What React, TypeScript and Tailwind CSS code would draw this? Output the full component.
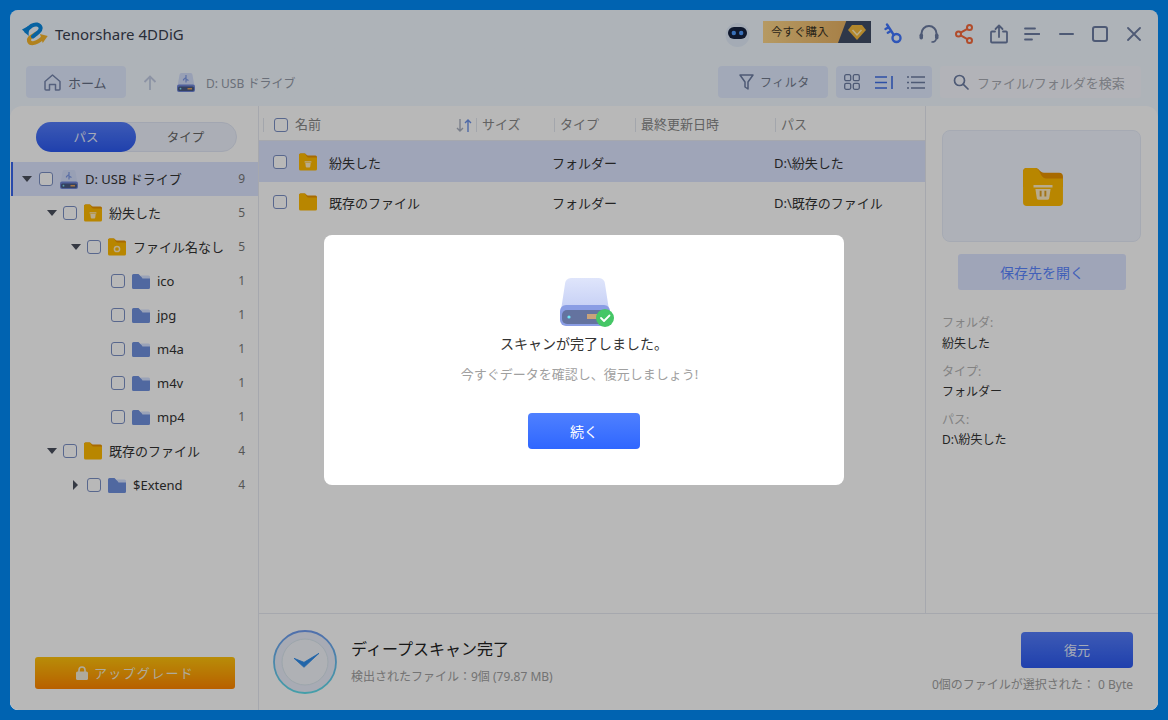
import React from "react";

const Check = ({ cls = "" }: { cls?: string }) => (
  <span className={"block w-[14px] h-[14px] shrink-0 rounded-[3px] border border-[#7b8fc4] bg-white " + cls} />
);

const Folder = ({ kind, size = 18 }: { kind: "trash" | "ring" | "plain" | "blue"; size?: number }) => {
  if (kind === "blue") {
    return (
      <svg width={size} height={size} viewBox="0 0 18 18" className="shrink-0">
        <path d="M0 3.5A1.5 1.5 0 0 1 1.5 2H6.500L9 4.500H16.500A1.500 1.500 0 0 1 18 6V15.500A1.500 1.500 0 0 1 16.500 17H1.500A1.500 1.500 0 0 1 0 15.500Z" fill="#7091de" />
        <path d="M8.500 3.500H16.500A1.500 1.500 0 0 1 18 5V6.500H10.500Z" fill="#d6e2ff" />
      </svg>
    );
  }
  return (
    <svg width={size} height={size} viewBox="0 0 18 18" className="shrink-0">
      <path d="M0 2A1.500 1.500 0 0 1 1.500 .5H5.500C7 .5 7.500 2.500 9 2.500H16.500A1.500 1.500 0 0 1 18 4V8H0Z" fill="#e99300" />
      <path d="M0 2A1.500 1.500 0 0 1 1.500 .5H5.500C7.500 .5 7 4.500 9.500 4.500H18V16A1.500 1.500 0 0 1 16.500 17.500H1.500A1.500 1.500 0 0 1 0 16Z" fill="#ffba00" />
      {kind === "trash" && (
        <g fill="#ffedc4">
          <rect x="5.500" y="8.200" width="7" height="1.200" rx=".5" />
          <path d="M6.300 10H11.700L11.200 13.800A.8.8 0 0 1 10.400 14.500H7.600A.8.8 0 0 1 6.800 13.800Z" />
        </g>
      )}
      {kind === "ring" && <circle cx="9" cy="11" r="2.600" fill="none" stroke="#ffedc4" strokeWidth="1.500" />}
    </svg>
  );
};

const SmallDrive = () => (
  <svg width="18" height="19" viewBox="0 0 18 19" className="shrink-0">
    <path d="M2.500 2A2 2 0 0 1 4.500 0H13.500A2 2 0 0 1 15.500 2L17.500 13H.5Z" fill="#d3defb" />
    <rect x="0" y="11.500" width="18" height="7.500" rx="2" fill="#6f86d8" />
    <rect x="1" y="13.500" width="16" height="4.500" rx="1.500" fill="#4a5a86" />
    <circle cx="3.500" cy="15.700" r=".9" fill="#7fe3f0" />
    <rect x="10.500" y="15" width="4.500" height="1.500" fill="#e5a35f" />
    <path d="M9 2V9.500M9 4.500L6.500 6.500V7.500M9 6L11.500 7.500" stroke="#7f9ae6" strokeWidth="1.200" fill="none" />
  </svg>
);

const Arrow = ({ dir }: { dir: "down" | "right" | "none" }) => (
  <span className="w-[11px] flex justify-center shrink-0">
    {dir === "down" && <span className="block w-0 h-0 border-x-[5px] border-x-transparent border-t-[6px] border-t-[#4a4f5e]" />}
    {dir === "right" && <span className="block w-0 h-0 border-y-[5px] border-y-transparent border-l-[5px] border-l-[#4a4f5e]" />}
  </span>
);

const rows = [
  { pl: "pl-[36px]", dir: "down", icon: "trash", label: "紛失した", n: 5 },
  { pl: "pl-[60px]", dir: "down", icon: "ring", label: "ファイル名なし", n: 5 },
  { pl: "pl-[84px]", dir: "none", icon: "blue", label: "ico", n: 1 },
  { pl: "pl-[84px]", dir: "none", icon: "blue", label: "jpg", n: 1 },
  { pl: "pl-[84px]", dir: "none", icon: "blue", label: "m4a", n: 1 },
  { pl: "pl-[84px]", dir: "none", icon: "blue", label: "m4v", n: 1 },
  { pl: "pl-[84px]", dir: "none", icon: "blue", label: "mp4", n: 1 },
  { pl: "pl-[36px]", dir: "down", icon: "plain", label: "既存のファイル", n: 4 },
  { pl: "pl-[60px]", dir: "right", icon: "blue", label: "$Extend", n: 4 },
] as const;

const Logo = () => (
  <svg width="26" height="24" viewBox="0 0 26 24" className="shrink-0">
    <path d="M14.500 11.500C10 14.500 6 15.500 7 19C8 22 13 22.500 20 16.500" fill="none" stroke="#f5b52a" strokeWidth="4" strokeLinecap="round" />
    <path d="M18 12L25.700 14L20.700 21Z" fill="#f5b52a" />
    <path d="M4.500 9.500C7 4 12 2 15 2.500C19 3.500 20 7 16.500 10L11 14.500" fill="none" stroke="#0a88e0" strokeWidth="4" strokeLinecap="round" />
    <path d="M0 7.500L6.500 4L6.700 14Z" fill="#0a88e0" />
  </svg>
);

const Robot = () => (
  <svg width="27" height="27" viewBox="0 0 27 27" className="shrink-0">
    <ellipse cx="13.500" cy="14" rx="12" ry="12" fill="#e3eefb" />
    <rect x="4" y="6" width="19" height="12" rx="6" fill="#15223f" />
    <circle cx="9.800" cy="12" r="2.200" fill="#4f9cff" />
    <circle cx="17.200" cy="12" r="2.200" fill="#4f9cff" />
  </svg>
);

const Gem = () => (
  <svg width="18" height="15" viewBox="0 0 18 15">
    <path d="M4 0H14L18 5L9 15L0 5Z" fill="#f7bb3c" />
    <path d="M4.500 5L9 10L13.500 5" fill="none" stroke="#fff0c0" strokeWidth="1.500" />
  </svg>
);

export default function App() {
  return (
    <div className="w-[1168px] h-[720px] bg-[#0063b1] p-[10px] font-['Noto_Sans','Noto_Sans_CJK_JP',sans-serif] text-[#333]">
      <div className="relative w-full h-full rounded-lg overflow-hidden flex flex-col bg-gradient-to-b from-[#f2f8ff] via-[#f2f8ff] to-[#e6f0ff]">
        {/* title bar */}
        <div className="h-[48px] flex items-center pl-[12px] shrink-0">
          <Logo />
          <span className="ml-[7px] text-[15px] text-[#39404f] mt-[1px]">Tenorshare 4DDiG</span>
          <div className="ml-auto flex items-center">
            <Robot />
            <div className="ml-[12px] -mt-[4px] w-[108px] h-[22px] flex overflow-hidden bg-gradient-to-r from-[#fcd589] to-[#e2a857]">
              <span className="w-[75px] text-[11.500px] leading-[22px] pl-[8px] text-[#3a3325]">今すぐ購入</span>
              <span className="flex-1 flex items-center justify-center bg-[#414d66] [clip-path:polygon(25%_0,100%_0,100%_100%,0_100%)] pl-[5px]">
                <Gem />
              </span>
            </div>
            <svg width="18" height="21" viewBox="0 0 18 21" className="ml-[13px] -mt-[2px]" fill="none" stroke="#4076ff" strokeWidth="2.400" strokeLinecap="round">
              <circle cx="12.500" cy="15" r="4" />
              <path d="M9.800 12L3 1.500M4.700 4.300L1.500 6M7 8L3.800 9.700" />
            </svg>
            <svg width="20" height="20" viewBox="0 0 20 20" className="ml-[17px]" fill="none" stroke="#6d7da3" strokeWidth="2" strokeLinecap="round">
              <path d="M2.500 12V9.500A7.500 7.500 0 0 1 17.500 9.500V12" />
              <rect x="0.500" y="9.500" width="3.500" height="6" rx="1.700" fill="#6d7da3" stroke="none" />
              <rect x="16" y="9.500" width="3.500" height="6" rx="1.700" fill="#6d7da3" stroke="none" />
              <path d="M17 15.500C16.500 17.500 15 18 13 18" strokeWidth="1.600" />
            </svg>
            <svg width="18" height="20" viewBox="0 0 18 20" className="ml-[16px]" fill="none" stroke="#f56a3c" strokeWidth="2">
              <circle cx="3.500" cy="10" r="2.500" />
              <circle cx="14.500" cy="3.500" r="2.500" />
              <circle cx="14.500" cy="16.500" r="2.500" />
              <path d="M5.700 8.700L12.300 4.800M5.700 11.300L12.300 15.200" />
            </svg>
            <svg width="18" height="20" viewBox="0 0 18 20" className="ml-[17px]" fill="none" stroke="#6d7da3" strokeWidth="1.800" strokeLinecap="round" strokeLinejoin="round">
              <path d="M5 7.500H2A1 1 0 0 0 1 8.500V17.500A1 1 0 0 0 2 18.500H16A1 1 0 0 0 17 17.500V8.500A1 1 0 0 0 16 7.500H13" />
              <path d="M9 13V2M5.500 5L9 1.500L12.500 5" />
            </svg>
            <svg width="16" height="14" viewBox="0 0 16 14" className="ml-[16px]" fill="none" stroke="#6d7da3" strokeWidth="1.800" strokeLinecap="round">
              <path d="M1 1.500H11M1 7H15.500M1 12.500H8" />
            </svg>
            <svg width="15" height="2" viewBox="0 0 15 2" className="ml-[19px]"><rect width="15" height="2" rx="1" fill="#6d7da3" /></svg>
            <svg width="16" height="16" viewBox="0 0 16 16" className="ml-[18px]" fill="none" stroke="#6d7da3" strokeWidth="2"><rect x="1" y="1" width="14" height="14" rx="2" /></svg>
            <svg width="14" height="14" viewBox="0 0 14 14" className="ml-[19px] mr-[17px]" fill="none" stroke="#6d7da3" strokeWidth="1.800" strokeLinecap="round"><path d="M1 1L13 13M13 1L1 13" /></svg>
          </div>
        </div>

        {/* toolbar */}
        <div className="mt-[8px] h-[32px] flex items-center pl-[16px] shrink-0">
          <div className="w-[100px] h-[32px] rounded-[4px] bg-[#e1ebff] flex items-center pl-[18px] gap-[7px]">
            <svg width="17" height="17" viewBox="0 0 17 17" fill="none" stroke="#7686ad" strokeWidth="1.500" strokeLinejoin="round">
              <path d="M1 7.500L8.500 1L16 7.500V15A1 1 0 0 1 15 16H11.500V10.500H5.500V16H2A1 1 0 0 1 1 15Z" />
            </svg>
            <span className="text-[13px] leading-[18px] mt-[2px] text-[#666f85]">ホーム</span>
          </div>
          <svg width="14" height="15" viewBox="0 0 14 15" className="ml-[17px]" fill="none" stroke="#c2cce4" strokeWidth="1.800"><path d="M7 15V1.500M1.500 7L7 1.500L12.500 7" /></svg>
          <span className="ml-[20px]"><SmallDrive /></span>
          <span className="ml-[11px] text-[12px] leading-[18px] mt-[3px] text-[#939aa8]">D: USB ドライブ</span>
          <div className="ml-auto w-[110px] h-[32px] rounded-[4px] bg-[#e1ebff] flex items-center pl-[21px] gap-[6px]">
            <svg width="15" height="16" viewBox="0 0 15 16" fill="none" stroke="#6d7da3" strokeWidth="1.500" strokeLinejoin="round"><path d="M1 1H14L9 8V15L6 13V8Z" /></svg>
            <span className="text-[12px] leading-[18px] mt-[2px] text-[#727a8c] tracking-[0.5px]">フィルタ</span>
          </div>
          <div className="ml-[8px] w-[96px] h-[32px] rounded-[4px] bg-[#e1ebff] flex items-center pl-[8px]">
            <svg width="16" height="16" viewBox="0 0 16 16" fill="none" stroke="#6d7da3" strokeWidth="1.300"><rect x=".7" y=".7" width="6" height="6" rx="1.500" /><rect x="9.300" y=".7" width="6" height="6" rx="1.500" /><rect x=".7" y="9.300" width="6" height="6" rx="1.500" /><rect x="9.300" y="9.300" width="6" height="6" rx="1.500" /></svg>
            <svg width="18" height="13" viewBox="0 0 18 13" className="ml-[15px]" fill="none" stroke="#3f6fe6" strokeWidth="1.600"><path d="M0 1H12M0 6.500H12M0 12H12M17 0V13" /></svg>
            <svg width="18" height="13" viewBox="0 0 18 13" className="ml-[14px]" fill="none" stroke="#6d7da3" strokeWidth="1.300"><path d="M4 1H18M4 6.500H18M4 12H18M0 1H2M0 6.500H2M0 12H2" /></svg>
          </div>
          <div className="ml-[8px] mr-[17px] w-[201px] h-[32px] rounded-[4px] bg-[#f7f9ff] flex items-center pl-[13px] gap-[8px]">
            <svg width="16" height="16" viewBox="0 0 16 16" fill="none" stroke="#6d7da3" strokeWidth="1.700" strokeLinecap="round"><circle cx="6.500" cy="6.500" r="5" /><path d="M10.300 10.300L15 15" /></svg>
            <span className="text-[13px] leading-[18px] mt-[2px] text-[#a8abb3] whitespace-nowrap">ファイル/フォルダを検索</span>
          </div>
        </div>

        {/* main panel */}
        <div className="mt-[8px] flex-1 min-h-0 bg-white rounded-t-[12px] flex">
          {/* sidebar */}
          <div className="w-[249px] shrink-0 border-r border-[#e6e9f2] flex flex-col">
            <div className="mt-[16px] ml-[26px] w-[201px] h-[30px] rounded-full bg-[#eef2fc] border border-[#e1e7f5] flex text-[12.500px] shrink-0">
              <span className="-m-px h-[30px] w-[100px] rounded-full bg-gradient-to-b from-[#557dfb] to-[#2c59f0] text-[#e6edff] flex items-center justify-center pt-[2px]">パス</span>
              <span className="flex-1 flex items-center justify-center text-[#666] pt-[2px]">タイプ</span>
            </div>
            <div className="mt-[10px] flex flex-col">
              <div className="h-[34px] pl-[8px] pr-[13px] flex items-center bg-[#dde5ff] border-l-2 border-[#3866ee] ml-[1px]">
                <Arrow dir="down" />
                <Check cls="ml-[7px]" />
                <span className="ml-[7px]"><SmallDrive /></span>
                <span className="ml-[7px] text-[13px] leading-[18px]">D: USB ドライブ</span>
                <span className="ml-auto text-[12px] leading-[18px] text-[#777]">9</span>
              </div>
              {rows.map((r) => (
                <div key={r.label} className={"h-[34px] pr-[13px] flex items-center " + r.pl}>
                  <Arrow dir={r.dir} />
                  <Check cls="ml-[6px]" />
                  <span className="ml-[7px]"><Folder kind={r.icon} /></span>
                  <span className="ml-[7px] text-[13px] leading-[18px]">{r.label}</span>
                  <span className="ml-auto text-[12px] leading-[18px] text-[#777]">{r.n}</span>
                </div>
              ))}
            </div>
            <div className="mt-auto mb-[21px] ml-[25px] w-[200px] h-[32px] rounded-[3px] bg-gradient-to-b from-[#ffc30d] to-[#ff8500] flex items-center justify-center gap-[6px] text-[13px] text-[#f3ecd8] tracking-[1.3px]">
              <svg width="12" height="14" viewBox="0 0 12 14"><path d="M3 6V4A3 3 0 0 1 9 4V6" fill="none" stroke="#f3ecd8" strokeWidth="1.600" /><rect y="5.500" width="12" height="8.500" rx="1.500" fill="#f3ecd8" /></svg>
              <span className="mt-[2px]">アップグレード</span>
            </div>
          </div>

          {/* right of sidebar */}
          <div className="flex-1 min-w-0 flex flex-col">
            <div className="flex-1 min-h-0 flex">
              <div className="flex-1 min-w-0 flex flex-col">
                <div className="h-[35px] pt-[4px] flex items-center text-[13px] text-[#888] border-b border-[#e6e9f2]">
                  <span className="ml-[4px] w-px h-[14px] bg-[#e2e6ef]" />
                  <Check cls="ml-[10px]" />
                  <span className="ml-[7px] w-[161px]">名前</span>
                  <svg width="16" height="13" viewBox="0 0 16 13" fill="none" strokeWidth="1.400">
                    <path d="M4 0V12M1 9L4 12L7 9" stroke="#a8afbf" />
                    <path d="M12 13V1M9 4L12 1L15 4" stroke="#6d92e8" />
                  </svg>
                  <span className="ml-[4px] w-px h-[14px] bg-[#e2e6ef]" />
                  <span className="ml-[5px] w-[72px]">サイズ</span>
                  <span className="w-px h-[14px] bg-[#e2e6ef]" />
                  <span className="ml-[5px] w-[75px]">タイプ</span>
                  <span className="w-px h-[14px] bg-[#e2e6ef]" />
                  <span className="ml-[5px] w-[134px]">最終更新日時</span>
                  <span className="w-px h-[14px] bg-[#e2e6ef]" />
                  <span className="ml-[5px]">パス</span>
                </div>
                <div className="h-[41px] flex items-center bg-[#dde5ff] text-[13px]">
                  <Check cls="ml-[14px]" />
                  <span className="ml-[12px]"><Folder kind="trash" /></span>
                  <span className="ml-[12px] w-[223px] pt-[4px]">紛失した</span>
                  <span className="w-[222px] pt-[4px]">フォルダー</span>
                  <span className="pt-[4px]">D:\紛失した</span>
                </div>
                <div className="h-[40px] flex items-center text-[13px]">
                  <Check cls="ml-[14px]" />
                  <span className="ml-[12px]"><Folder kind="plain" /></span>
                  <span className="ml-[12px] w-[223px] pt-[4px]">既存のファイル</span>
                  <span className="w-[222px] pt-[4px]">フォルダー</span>
                  <span className="pt-[4px]">D:\既存のファイル</span>
                </div>
              </div>
              <div className="w-[233px] shrink-0 border-l border-[#e6e9f2] pl-[16px] flex flex-col">
                <div className="mt-[24px] w-[199px] h-[112px] rounded-[8px] bg-[#f2f6ff] border border-[#e6ecf9] flex items-center justify-center shrink-0">
                  <svg width="40" height="38" viewBox="0 0 42 40" className="mt-[2px] ml-[2px]">
                    <path d="M0 4A4 4 0 0 1 4 0H13C17 0 18 5 22 5H38A4 4 0 0 1 42 9V20H0Z" fill="#e99300" />
                    <path d="M0 4A4 4 0 0 1 4 0H13C18 0 18 11 24 11H42V36A4 4 0 0 1 38 40H4A4 4 0 0 1 0 36Z" fill="#ffba00" />
                    <path d="M11 18H31V20.500H11ZM13 22H29L27.500 32A2 2 0 0 1 25.500 33.500H16.500A2 2 0 0 1 14.500 32Z" fill="#ffedc4" />
                    <path d="M18.500 24V30M23.500 24V30" stroke="#e0a020" strokeWidth="2" />
                  </svg>
                </div>
                <div className="mt-[12px] ml-[16px] w-[168px] h-[36px] rounded-[3px] bg-[#dde5ff] text-[#5a85ff] text-[14px] flex items-center justify-center shrink-0">保存先を開く</div>
                <div className="mt-[24px] text-[12px] leading-[18px] text-[#b4b4b4]">フォルダ:</div>
                <div className="mt-[3px] text-[12px] leading-[18px]">紛失した</div>
                <div className="mt-[10px] text-[12px] leading-[18px] text-[#b4b4b4]">タイプ:</div>
                <div className="mt-[2px] text-[12px] leading-[18px]">フォルダー</div>
                <div className="mt-[10px] text-[12px] leading-[18px] text-[#b4b4b4]">パス:</div>
                <div className="mt-[2px] text-[12px] leading-[18px]">D:\紛失した</div>
              </div>
            </div>
            <div className="h-[97px] shrink-0 border-t border-[#e6e9f2] flex items-center pl-[14px] pr-[25px]">
              <svg width="64" height="64" viewBox="0 0 64 64" className="shrink-0 -mt-[1px]">
                <defs>
                  <linearGradient id="ring" x1="0" y1="0" x2="0" y2="1">
                    <stop offset="0" stopColor="#6f9bef" />
                    <stop offset="1" stopColor="#5fdcea" />
                  </linearGradient>
                </defs>
                <circle cx="32" cy="32" r="31" fill="#e9edfa" stroke="url(#ring)" strokeWidth="1.800" />
                <circle cx="32" cy="32" r="23" fill="#f3f5fb" stroke="#d9e6ee" strokeWidth="1" />
                <path d="M21 28.300L31 37.300L46 23.300L31 32.300Z" fill="#2f8cea" stroke="#2f8cea" strokeWidth=".8" strokeLinejoin="round" />
              </svg>
              <div className="ml-[14px] flex flex-col">
                <span className="text-[16px] leading-[20px] text-[#222]">ディープスキャン完了</span>
                <span className="mt-[10px] text-[12px] leading-[16px] text-[#a0a0a0] whitespace-nowrap">検出されたファイル：9個 (79.87 MB)</span>
              </div>
              <div className="ml-auto flex flex-col items-end mt-[1px]">
                <div className="w-[112px] h-[36px] rounded-[4px] bg-gradient-to-b from-[#557dfb] to-[#2c59f0] text-[#e6edff] text-[13px] pt-[2px] flex items-center justify-center">復元</div>
                <span className="mt-[9px] text-[12px] leading-[16px] text-[#a0a0a0] whitespace-nowrap">0個のファイルが選択された： 0 Byte</span>
              </div>
            </div>
          </div>
        </div>

        {/* dimming layer + dialog */}
        <div className="absolute inset-0 bg-black/28 flex items-center justify-center">
          <div className="w-[520px] h-[250px] rounded-[8px] bg-white flex flex-col items-center">
            <svg width="56" height="50" viewBox="0 0 56 50" className="mt-[43px] ml-[6px] shrink-0">
              <defs>
                <linearGradient id="dTop" x1="0" y1="0" x2="0" y2="1">
                  <stop offset="0" stopColor="#dfe5fb" />
                  <stop offset="1" stopColor="#c5cff5" />
                </linearGradient>
              </defs>
              <path d="M6 6A6 6 0 0 1 12 0H40A6 6 0 0 1 46 6L50 32H2Z" fill="url(#dTop)" />
              <rect x="1" y="27" width="50" height="21" rx="6" fill="#8a9de4" />
              <rect x="3" y="32" width="46" height="14" rx="5" fill="#64739f" />
              <circle cx="10" cy="39" r="1.600" fill="#6fe7f5" />
              <rect x="28" y="36" width="10" height="5" fill="#c9a37a" />
              <circle cx="46" cy="40" r="9" fill="#45c666" />
              <path d="M42 40L45 43L50.500 37.500" fill="none" stroke="#fff" strokeWidth="1.800" strokeLinecap="round" strokeLinejoin="round" />
            </svg>
            <div className="mt-[6px] text-[14px] leading-[20px] text-[#333]">スキャンが完了しました。</div>
            <div className="mt-[11px] -ml-[9px] text-[13px] leading-[18px] text-[#a0a0a0]">今すぐデータを確認し、復元しましょう!</div>
            <div className="mt-[30px] w-[112px] h-[36px] rounded-[4px] bg-gradient-to-b from-[#4f80ff] to-[#2f66ff] text-white text-[14px] flex items-center justify-center">続く</div>
          </div>
        </div>
      </div>
    </div>
  );
}
